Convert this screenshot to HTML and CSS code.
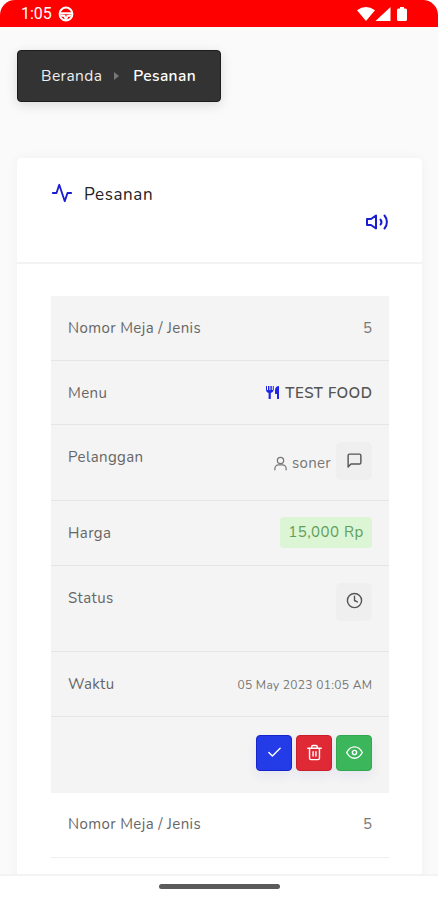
FILE: index.html
```html
<!DOCTYPE html>
<html lang="id">
<head>
<meta charset="utf-8">
<meta name="viewport" content="width=device-width">
<title>Pesanan</title>
<link rel="stylesheet" href="styles.css">
</head>
<body>
<div class="screen">
  <header class="statusbar">
    <span class="clock">1:05</span>
    <svg class="wheel" viewBox="0 0 16 16"><circle cx="8" cy="8" r="6.4"/><path d="M2 7.2h12M3 9.5l3.500.5 1.500 4M13 9.500l-3.500.5-1.500 4"/></svg>
    <svg class="signals" viewBox="0 0 52 16"><path d="M0 4.300Q9 -2.500 18 4.300L9 15zM18.500 15L33.500 1v14zM40 4q0-1.500 1.500-1.500H43V1h4v1.500h1.500Q50 2.500 50 4v9.500q0 1.500-1.500 1.500h-7Q40 15 40 13.500z"/></svg>
  </header>
  <main class="content">
    <nav class="crumbs"><span class="home">Beranda</span><svg viewBox="0 0 5 8"><path d="M0 0l5 4-5 4z"/></svg><span class="current">Pesanan</span></nav>
    <section class="card">
      <div class="card-head">
        <div class="title"><svg class="icon" viewBox="0 0 24 24"><path d="M22 12h-4l-3 9L9 3l-3 9H2"/></svg><h1>Pesanan</h1></div>
        <svg class="icon sound" viewBox="0 0 24 20"><path d="M11 3.500L6 7H2v6h4l5 3.500zM15.500 7.500a4 4 0 0 1 0 5M19.500 3.500a10 10 0 0 1 0 13"/></svg>
      </div>
      <div class="orders">
        <div class="order shaded">
          <div class="row"><span class="label">Nomor Meja / Jenis</span><span class="value">5</span></div>
          <div class="row"><span class="label">Menu</span><span class="value food"><svg viewBox="0 0 14 13"><path d="M0 0h1v4h1V0h1.400v4h1V0h1.400v4h1V0h1v4Q7 6.500 4.800 7v6H2.600V7Q.2 6.500 0 4zM13 0v13h-2V8H9V4q.5-4 4-4z"/></svg><b>TEST FOOD</b></span></div>
          <div class="row customer"><span class="label">Pelanggan</span><span class="value person"><svg class="icon user" viewBox="0 0 24 24"><path d="M3 22v-2a6 6 0 0 1 6-6h6a6 6 0 0 1 6 6v2"/><circle cx="12" cy="7" r="5"/></svg><span>soner</span><i class="chip"><svg class="icon" viewBox="0 0 24 24"><path d="M21 15a2 2 0 0 1-2 2H7l-4 4V5a2 2 0 0 1 2-2h14a2 2 0 0 1 2 2z"/></svg></i></span></div>
          <div class="row harga"><span class="label">Harga</span><span class="price">15,000 Rp</span></div>
          <div class="row status"><span class="label">Status</span><i class="chip"><svg class="icon" viewBox="0 0 24 24"><circle cx="12" cy="12" r="10"/><path d="M12 6v6l4 2"/></svg></i></div>
          <div class="row waktu"><span class="label">Waktu</span><time>05 May 2023 01:05 AM</time></div>
          <div class="row actions">
            <button class="btn blue" aria-label="OK"><svg class="icon" viewBox="0 0 24 24"><path d="M20 6L9 17l-5-5"/></svg></button>
            <button class="btn red" aria-label="Hapus"><svg class="icon" viewBox="0 0 24 24"><path d="M2.500 6h19M19 6v14a2 2 0 0 1-2 2H7a2 2 0 0 1-2-2V6m3 0V4a2 2 0 0 1 2-2h4a2 2 0 0 1 2 2v2M10 11v6M14 11v6"/></svg></button>
            <button class="btn green" aria-label="Lihat"><svg class="icon" viewBox="0 0 24 24"><path d="M1 12s4-8 11-8 11 8 11 8-4 8-11 8S1 12 1 12z"/><circle cx="12" cy="12" r="3"/></svg></button>
          </div>
        </div>
        <div class="order">
          <div class="row second"><span class="label">Nomor Meja / Jenis</span><span class="value">5</span></div>
        </div>
      </div>
    </section>
  </main>
  <footer class="navbar"><span></span></footer>
</div>
</body>
</html>
```
FILE: styles.css
```css
* { box-sizing: border-box; }
body { margin: 0; background: #fff; font-family: Nunito, "Open Sans", sans-serif; font-size: 15px; color: #666; }
.screen { height: 900px; display: flex; flex-direction: column; overflow: hidden; }
.statusbar { height: 27px; flex: none; background: #f00; border-radius: 15px 15px 0 0; display: flex; align-items: center; padding: 1px 30px 0 21px; color: #fff; }
.clock { font: 400 16px/20px Roboto, sans-serif; width: 31px; }
.wheel { width: 16px; height: 16px; margin-left: 6px; fill: none; stroke: #fff; stroke-width: 2; }
.signals { width: 52px; height: 16px; margin-left: auto; margin-right: -1px; fill: #fff; }
.content { flex: 1; min-height: 0; overflow: hidden; background: #fafafa; padding: 23px 16px 0 17px; }
.crumbs { width: 204px; height: 52px; background: #333; border: 1px solid #1d1d1d; border-radius: 4px; box-shadow: 0 3px 12px rgba(0,0,0,.13); display: flex; align-items: center; padding: 0 23px; color: #eee; line-height: 20px; font-size: 15.500px; letter-spacing: .4px; }
.crumbs svg { width: 5px; height: 8px; margin: 0 14px 0 12px; fill: #777; }
.current { font-weight: 600; color: #fff; }
.card { margin-top: 56px; height: 760px; background: #fff; border-radius: 4px; box-shadow: 0 0 12px rgba(0,0,0,.045); }
.card-head { height: 106px; border-bottom: 2px solid #f3f3f3; padding: 24px 34px 0; display: flex; flex-direction: column; }
.icon { fill: none; stroke: currentColor; stroke-width: 2; stroke-linecap: round; stroke-linejoin: round; width: 17px; height: 17px; display: block; flex: none; }
.title { display: flex; height: 26px; color: #191cd0; }
.title .icon { width: 22px; height: 22px; }
h1 { margin: 0 0 0 11px; font-size: 17px; font-weight: 400; line-height: 26px; color: #222; letter-spacing: .6px; }
.sound { width: 24px; height: 20px; align-self: flex-end; margin-top: 4px; margin-right: -1px; color: #191cd0; }
.orders { padding: 32px 33px 0 34px; }
.shaded { background: #f4f4f4; }
.row { height: 64.500px; border-bottom: 1.500px solid #e5e5e5; padding: 20px 17px 0; display: flex; justify-content: space-between; line-height: 24px; }
.label { letter-spacing: .38px; }
.value { color: #777; }
.row.second { border-color: #f0f0f0; padding-top: 19px; }
.food { display: flex; align-items: center; gap: 5px; height: 24px; color: #555; }
.food svg { width: 14px; height: 13px; fill: #2025e8; }
.food b { font-weight: 600; letter-spacing: .5px; margin-right: -.5px; }
.customer { height: 76px; }
.person { display: flex; gap: 4px; }
.person > span { margin-top: 6px; letter-spacing: .3px; }
.user { width: 15px; height: 15px; margin-top: 11px; color: #777; }
.person .chip { margin-left: 1px; }
.chip { width: 36px; height: 38px; margin-top: -3px; padding-bottom: 2px; background: #efefef; border-radius: 5px; display: flex; align-items: center; justify-content: center; color: #555; }
.price { width: 92px; height: 31px; margin-top: -4px; border-radius: 4px; background: #dcf5d4; color: #5e9e59; text-align: center; line-height: 30px; letter-spacing: .5px; }
.status { height: 86.500px; }
.waktu { height: 65px; }
time { font-size: 12px; line-height: 26px; color: #777; letter-spacing: .3px; margin-right: -.3px; }
.actions { height: 76px; border: 0; padding-top: 18px; justify-content: flex-end; gap: 4px; }
.btn { width: 36px; height: 36px; padding: 0 0 1px; border: 1px solid; border-radius: 4px; color: #fff; display: flex; align-items: center; justify-content: center; box-shadow: 0 5px 12px rgba(40,40,180,.07); }
.blue { background: #243be8; border-color: #1625cb; }
.red { background: #df2935; border-color: #c8202b; }
.green { background: #3bb65b; border-color: #32a951; }
.navbar { flex: none; height: 26px; background: #fff; border-top: 2px solid #f3f3f3; display: flex; justify-content: center; padding-top: 8px; }
.navbar span { width: 121px; height: 5px; border-radius: 3px; background: #5b5b5b; }
```
